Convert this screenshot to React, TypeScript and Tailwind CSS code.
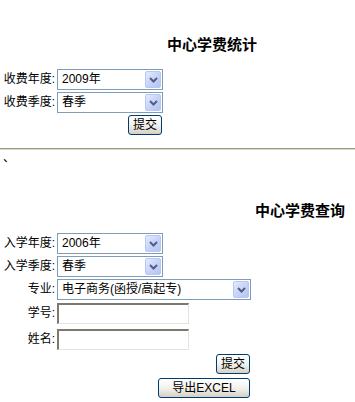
const font = { fontFamily: '"Liberation Sans", "Noto Sans CJK SC", sans-serif' };

const Arrow = () => (
  <div className="absolute right-px top-px bottom-px w-[16px] rounded-[2px] border border-[#b7c8f6] bg-gradient-to-br from-[#e3ebfd] via-[#c9d3f8] to-[#b4c4f0] flex items-center justify-center">
    <svg width="9" height="6" viewBox="0 0 9 6">
      <path d="M1 1 L4.5 4.5 L8 1" fill="none" stroke="#4d6185" strokeWidth="2" />
    </svg>
  </div>
);

const FakeSelect = ({ value, width }: { value: string; width: string }) => (
  <div className={`relative h-[21px] border border-[#7f9db9] bg-white ${width}`}>
    <span className="absolute left-[4px] top-[2px] text-[12px] leading-[15px] text-black">{value}</span>
    <Arrow />
  </div>
);

const TextBox = () => (
  <div className="h-[21px] w-[132px] border-t-2 border-l-2 border-b border-r border-t-[#7d7a6d] border-l-[#7d7a6d] border-b-[#e3e3e3] border-r-[#e3e3e3] bg-white" />
);

const XpButton = ({ label, width }: { label: string; width: string }) => (
  <div className={`h-[20px] ${width} rounded-[3px] border border-[#003c74] bg-gradient-to-b from-white via-[#f2f2ee] to-[#d6d0c5] flex items-center justify-center text-[12px] text-black leading-none`}>
    {label}
  </div>
);

const Row = ({ label, children }: { label: string; children: React.ReactNode }) => (
  <div className="flex items-center">
    <div className="w-[55px] text-right text-[12px] leading-[15px] text-black whitespace-nowrap">{label}</div>
    <div className="ml-[2px]">{children}</div>
  </div>
);

export default function App() {
  return (
    <div className="w-[355px] h-[402px] bg-white overflow-hidden" style={font}>
      <div className="pt-[36px]">
        <div className="pl-[167px] text-[15px] leading-[18px] font-bold text-black">中心学费统计</div>
      </div>
      <div className="mt-[15px] flex flex-col gap-[2px]">
        <Row label="收费年度:"><FakeSelect value="2009年" width="w-[106px]" /></Row>
        <Row label="收费季度:"><FakeSelect value="春季" width="w-[106px]" /></Row>
      </div>
      <div className="mt-[2px] pl-[128px]">
        <XpButton label="提交" width="w-[34px]" />
      </div>
      <div className="mt-[13px] h-[2px] border-t border-t-[#9c9a85] border-b border-b-[#d8d6c8]" />
      <div className="mt-[2px] pl-[3px] text-[12px] leading-[12px] h-[12px] text-black">、</div>

      <div className="mt-[38px] pl-[255px] text-[15px] leading-[18px] font-bold text-black">中心学费查询</div>
      <div className="mt-[13px] flex flex-col gap-[2px]">
        <Row label="入学年度:"><FakeSelect value="2006年" width="w-[106px]" /></Row>
        <Row label="入学季度:"><FakeSelect value="春季" width="w-[106px]" /></Row>
        <Row label="专业:"><FakeSelect value="电子商务(函授/高起专)" width="w-[194px]" /></Row>
        <div className="mt-[1px]"><Row label="学号:"><TextBox /></Row></div>
        <div className="mt-[3px]"><Row label="姓名:"><TextBox /></Row></div>
      </div>
      <div className="mt-[4px] pl-[216px]">
        <XpButton label="提交" width="w-[34px]" />
      </div>
      <div className="mt-[4px] pl-[158px]">
        <XpButton label="导出EXCEL" width="w-[92px]" />
      </div>
    </div>
  );
}
